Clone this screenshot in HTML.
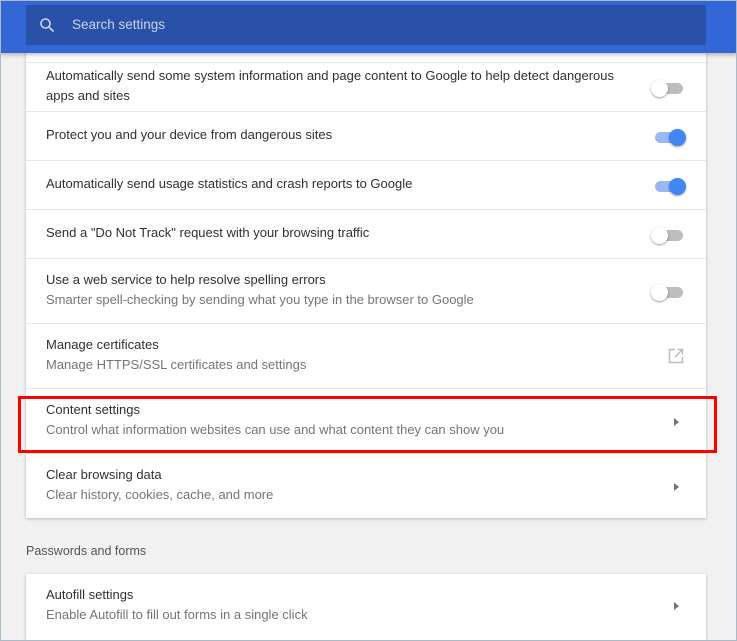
<!DOCTYPE html>
<html><head><style>
*{box-sizing:border-box;margin:0;padding:0}
html,body{width:737px;height:641px;overflow:hidden}
body{background:#f1f1f1;font-family:"Liberation Sans",sans-serif;font-size:13px;color:#303030;position:relative}
.frame{position:absolute;left:0;top:0;width:737px;height:641px;border:1px solid #a9bccb;z-index:5;pointer-events:none}
.hdr{position:absolute;left:0;top:0;width:737px;height:53px;background:#3367d6;box-shadow:0 2px 4px rgba(0,0,0,.25);z-index:2}
.search{position:absolute;left:26px;top:5px;width:680px;height:40px;background:#2a51a8;border-radius:2px}
.search span{position:absolute;left:46px;top:12px;color:#c6d3ee;font-size:13.5px}
.card{position:absolute;left:26px;width:680px;background:#fff;box-shadow:0 1px 3px rgba(0,0,0,.25)}
.row{position:absolute;left:0;width:680px;border-top:1px solid #e8e8e8}
.t{position:absolute;left:20px;line-height:20px}
.s{color:#757575}
.tog{position:absolute;left:629px;width:28px;height:11px;border-radius:6px;background:#bdbdbd}
.tog i{position:absolute;top:-3px;left:-4px;width:17px;height:17px;border-radius:50%;background:#fff;box-shadow:0 1px 2px rgba(0,0,0,.4)}
.tog.on{background:#9ab8f3}.tog.on i{left:14px;background:#4285f4}
.arr{position:absolute;left:648px;width:0;height:0;border-left:5px solid #757575;border-top:4px solid transparent;border-bottom:4px solid transparent}
</style></head><body>
<div class="frame"></div>
<div class="hdr"><div class="search"><svg style="position:absolute;left:13px;top:12px" width="16" height="16" viewBox="0 0 16 16"><circle cx="6.5" cy="6.5" r="4.5" fill="none" stroke="#c6d3ee" stroke-width="1.6"/><path d="M10 10l4.5 4.5" stroke="#c6d3ee" stroke-width="1.8"/></svg><span>Search settings</span></div></div>
<div class="card" style="top:40px;height:478px">
<div class="row" style="top:22px;height:49px"><div class="t" style="top:3px">Automatically send some system information and page content to Google to help detect dangerous<br>apps and sites</div><div class="tog" style="top:20px"><i></i></div></div>
<div class="row" style="top:71px;height:49px"><div class="t" style="top:13px">Protect you and your device from dangerous sites</div><div class="tog on" style="top:20px"><i></i></div></div>
<div class="row" style="top:120px;height:49px"><div class="t" style="top:13px">Automatically send usage statistics and crash reports to Google</div><div class="tog on" style="top:20px"><i></i></div></div>
<div class="row" style="top:169px;height:49px"><div class="t" style="top:13px">Send a "Do Not Track" request with your browsing traffic</div><div class="tog" style="top:20px"><i></i></div></div>
<div class="row" style="top:218px;height:65px"><div class="t" style="top:11px">Use a web service to help resolve spelling errors<br><span class="s">Smarter spell-checking by sending what you type in the browser to Google</span></div><div class="tog" style="top:28px"><i></i></div></div>
<div class="row" style="top:283px;height:65px"><div class="t" style="top:11px">Manage certificates<br><span class="s">Manage HTTPS/SSL certificates and settings</span></div><svg style="position:absolute;left:642px;top:24px" width="16" height="16" viewBox="0 0 16 16"><path d="M7 1.5H1.5v13h13V9M9.5 1.5h5v5M14.5 1.5L7 9" fill="none" stroke="#bdbdbd" stroke-width="1.5"/></svg></div>
<div class="row" style="top:348px;height:65px"><div class="t" style="top:11px">Content settings<br><span class="s">Control what information websites can use and what content they can show you</span></div><div class="arr" style="top:29px"></div></div>
<div class="row" style="top:413px;height:65px"><div class="t" style="top:11px">Clear browsing data<br><span class="s">Clear history, cookies, cache, and more</span></div><div class="arr" style="top:29px"></div></div>
</div>
<div style="position:absolute;left:18px;top:396px;width:699px;height:57px;border:3px solid #f00;z-index:3"></div>
<div style="position:absolute;left:26px;top:544px;color:#555;font-size:12.5px">Passwords and forms</div>
<div class="card" style="top:574px;height:66px">
<div class="t" style="top:11px">Autofill settings<br><span class="s">Enable Autofill to fill out forms in a single click</span></div><div class="arr" style="top:28px"></div>
</div>
</body></html>
